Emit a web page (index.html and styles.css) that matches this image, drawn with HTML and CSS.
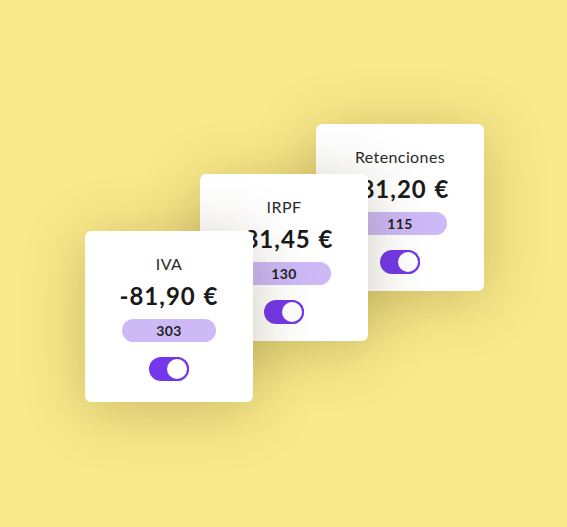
FILE: index.html
```html
<!DOCTYPE html>
<html lang="es">
<head>
<meta charset="utf-8">
<title>Impuestos</title>
<link rel="stylesheet" href="styles.css">
</head>
<body>
  <div class="stage">
    <div class="card card--front">
      <div class="label">IVA</div>
      <div class="amount">-81,90 €</div>
      <div class="pill">303</div>
      <div class="toggle"><span class="knob"></span></div>
    </div>
    <div class="card card--middle">
      <div class="label">IRPF</div>
      <div class="amount">-81,45 €</div>
      <div class="pill">130</div>
      <div class="toggle"><span class="knob"></span></div>
    </div>
    <div class="card card--back">
      <div class="label">Retenciones</div>
      <div class="amount">-81,20 €</div>
      <div class="pill">115</div>
      <div class="toggle"><span class="knob"></span></div>
    </div>
  </div>
</body>
</html>
```

FILE: styles.css
```css
html, body {
  margin: 0;
  padding: 0;
}

body {
  background: #f9e98a;
  width: 567px;
  height: 527px;
  overflow: hidden;
  font-family: "Lato", "Open Sans", sans-serif;
  color: #1c1c1c;
}

.stage {
  display: flex;
  align-items: flex-start;
  padding-left: 85px;
}

.card {
  width: 168px;
  box-sizing: border-box;
  background: #ffffff;
  border-radius: 6px;
  padding: 23px 0 21px;
  display: flex;
  flex-direction: column;
  align-items: center;
  box-shadow: 0 8px 60px rgba(70, 55, 0, 0.26);
}

.card--front {
  margin-top: 231px;
  z-index: 3;
  position: relative;
}

.card--middle {
  margin-top: 174px;
  margin-left: -53px;
  padding-bottom: 17px;
  z-index: 2;
  position: relative;
}

.card--back {
  margin-top: 124px;
  margin-left: -52px;
  padding-bottom: 17px;
  z-index: 1;
  position: relative;
}

.label {
  font-size: 16px;
  line-height: 20px;
  font-weight: 400;
  letter-spacing: 0.4px;
  color: #2a2a2a;
}

.amount {
  margin-top: 7px;
  font-size: 24px;
  line-height: 30px;
  font-weight: 700;
  letter-spacing: 1px;
  word-spacing: 1px;
  color: #1a1a1a;
  white-space: nowrap;
}

.pill {
  margin-top: 8px;
  width: 94px;
  height: 23px;
  border-radius: 12px;
  background: #cdb9f6;
  font-size: 14px;
  line-height: 23px;
  font-weight: 700;
  letter-spacing: 0.4px;
  text-align: center;
  color: #222222;
}

.toggle {
  margin-top: 15px;
  width: 40px;
  height: 24px;
  border-radius: 12px;
  background: #7437ea;
  display: flex;
  justify-content: flex-end;
}

.knob {
  width: 24px;
  height: 24px;
  box-sizing: border-box;
  border-radius: 50%;
  background: #ffffff;
  border: 2px solid #7437ea;
}
```
